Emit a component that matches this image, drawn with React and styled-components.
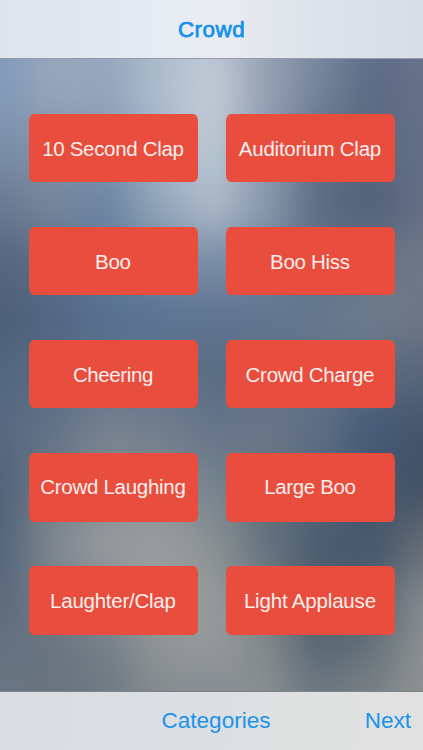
import React from "react";
import styled, { createGlobalStyle } from "styled-components";

const GlobalStyle = createGlobalStyle`
  body { margin: 0; }
  button { font: inherit; border: 0; padding: 0; background: none; cursor: pointer; }
`;

const Screen = styled.div`
  position: relative;
  isolation: isolate;
  width: 423px;
  height: 750px;
  overflow: hidden;
  display: flex;
  flex-direction: column;
  font-family: "Liberation Sans", Arial, sans-serif;
`;

const Wallpaper = styled.svg`
  position: absolute;
  inset: 0;
  z-index: -1;
`;

const NavBar = styled.header`
  height: 59px;
  box-sizing: border-box;
  flex: none;
  display: flex;
  align-items: center;
  justify-content: center;
  background: linear-gradient(90deg, #dfe5ee 0%, #e2e8f0 25%, #e6ecf3 40%, #e9ecf1 52%, #e2e6ed 65%, #dce1ea 80%, #d7dde7 100%);
  border-bottom: 1px solid #949cab;
`;

const Title = styled.h1`
  margin: 2px 0 0;
  font-size: 22.4px;
  line-height: 28px;
  font-weight: 400;
  letter-spacing: 0.5px;
  color: #1391ec;
  -webkit-text-stroke: 0.75px #1391ec;
`;

const SoundGrid = styled.main`
  flex: 1;
  display: grid;
  grid-template-columns: 169px 169px;
  grid-template-rows: repeat(5, 68.5px);
  column-gap: 28px;
  row-gap: 44.7px;
  align-content: start;
  padding: 54.6px 28px 0 29px;
`;

const SoundButton = styled.button`
  display: flex;
  align-items: center;
  justify-content: center;
  border-radius: 5px / 7px;
  background: #e84d3d;
`;

const SoundLabel = styled.span`
  font-size: 20.5px;
  line-height: 24px;
  letter-spacing: ${(p) => p.$tracking}px;
  color: #fbefed;
  white-space: nowrap;
  transform: translate(-0.6px, ${(p) => p.$drop ?? 0.6}px);
`;

const Toolbar = styled.footer`
  height: 59px;
  box-sizing: border-box;
  flex: none;
  display: grid;
  grid-template-columns: 1fr auto 1fr;
  align-items: center;
  padding: 0 12px 0 21px;
  background: linear-gradient(90deg, #d9dce1 0%, #dbdee2 40%, #dee0e1 65%, #e1e1e1 100%);
  border-top: 1px solid #7e8388;
`;

const ToolbarAction = styled.button`
  grid-column: ${(p) => p.$column};
  justify-self: ${(p) => (p.$column === 3 ? "end" : "center")};
  font-size: 22.5px;
  line-height: 28px;
  color: #1b93ec;
`;

const STEP_X = 53;
const ROWS = [
  [30, "#829abc #96a5bb #97a7bb #abbbca #bcc7d4 #949fb0 #7989a0 #62708a #68738c"],
  [86, "#829abc #98a6b9 #93a5bd #adbdcc #c4ccd8 #96a2b3 #75849a #5c6a85 #67728a"],
  [146, "#7a8eaa #8593a8 #8496af #a1b4c8 #c0cad6 #8c9aad #63718a #59677f #657088"],
  [204, "#6a7992 #76869c #6a83a3 #94a6b9 #aebbc9 #8999ac #5d6c82 #4f6077 #656f84"],
  [262, "#54647c #5d6f8a #627b9b #7188a4 #7c8fa8 #6f829b #627288 #667589 #6f7786"],
  [318, "#4e5f77 #526583 #577091 #5b7393 #5e7491 #617591 #64778d #6c7c8b #6d7585"],
  [375, "#53667f #596d86 #607289 #5e718a #5b6d84 #5d6f85 #62728a #5b6b81 #586579"],
  [431, "#566880 #637386 #778290 #737f8d #657488 #6a7686 #5e6e84 #455a78 #44546a"],
  [488, "#506379 #6f7b88 #858c93 #848b92 #788490 #66737f #54667c #45586f #435163"],
  [544, "#526479 #808891 #969a9d #9b9e9e #8b9193 #64727f #4c5c6d #435669 #666c76"],
  [601, "#5b6a7b #727d88 #848b92 #989b9b #979b9b #7a8389 #4d5d6d #566673 #868a8f"],
  [661, "#677381 #66727e #727d87 #8e9394 #94989a #858b8c #5a6977 #68747c #8e9293"],
  [691, "#697482 #6a7480 #6f7a84 #848a8e #838b92 #8b8f90 #6d7882 #7c8285 #8f9292"],
].map(([y, colors]) => ({ y, colors: colors.split(" ") }));

function BlurredWallpaper() {
  return (
    <Wallpaper width="423" height="750" viewBox="0 0 423 750" aria-hidden="true">
      <defs>
        <filter id="soften" filterUnits="userSpaceOnUse" x="-80" y="-60" width="583" height="880" colorInterpolationFilters="sRGB">
          <feGaussianBlur stdDeviation="20 21" />
        </filter>
      </defs>
      <g filter="url(#soften)" shapeRendering="crispEdges">
        {ROWS.map((row, r) =>
          row.colors.map((fill, c) => {
            const left = c === 0 ? -80 : c * STEP_X - 26;
            const right = c === 8 ? 510 : c * STEP_X + 27;
            const top = r === 0 ? -60 : (ROWS[r - 1].y + row.y) / 2;
            const bottom = r === ROWS.length - 1 ? 820 : (ROWS[r + 1].y + row.y) / 2;
            return <rect key={`${r}-${c}`} x={left} y={top} width={right - left} height={bottom - top + 1} fill={fill} />;
          })
        )}
      </g>
    </Wallpaper>
  );
}

const SOUNDS = [
  { name: "10 Second Clap", tracking: -0.33 },
  { name: "Auditorium Clap", tracking: -0.25 },
  { name: "Boo", tracking: -0.3 },
  { name: "Boo Hiss", tracking: -0.3 },
  { name: "Cheering", tracking: -0.4, drop: 1 },
  { name: "Crowd Charge", tracking: -0.3, drop: 1 },
  { name: "Crowd Laughing", tracking: -0.28, drop: -0.4 },
  { name: "Large Boo", tracking: -0.35, drop: -0.4 },
  { name: "Laughter/Clap", tracking: -0.25, drop: 0 },
  { name: "Light Applause", tracking: -0.18, drop: 0 },
];

export default function App() {
  return (
    <>
      <GlobalStyle />
      <Screen>
        <BlurredWallpaper />
        <NavBar>
          <Title>Crowd</Title>
        </NavBar>
        <SoundGrid>
          {SOUNDS.map(({ name, tracking, drop }) => (
            <SoundButton key={name} type="button">
              <SoundLabel $tracking={tracking} $drop={drop}>{name}</SoundLabel>
            </SoundButton>
          ))}
        </SoundGrid>
        <Toolbar>
          <ToolbarAction type="button" $column={2}>Categories</ToolbarAction>
          <ToolbarAction type="button" $column={3}>Next</ToolbarAction>
        </Toolbar>
      </Screen>
    </>
  );
}
